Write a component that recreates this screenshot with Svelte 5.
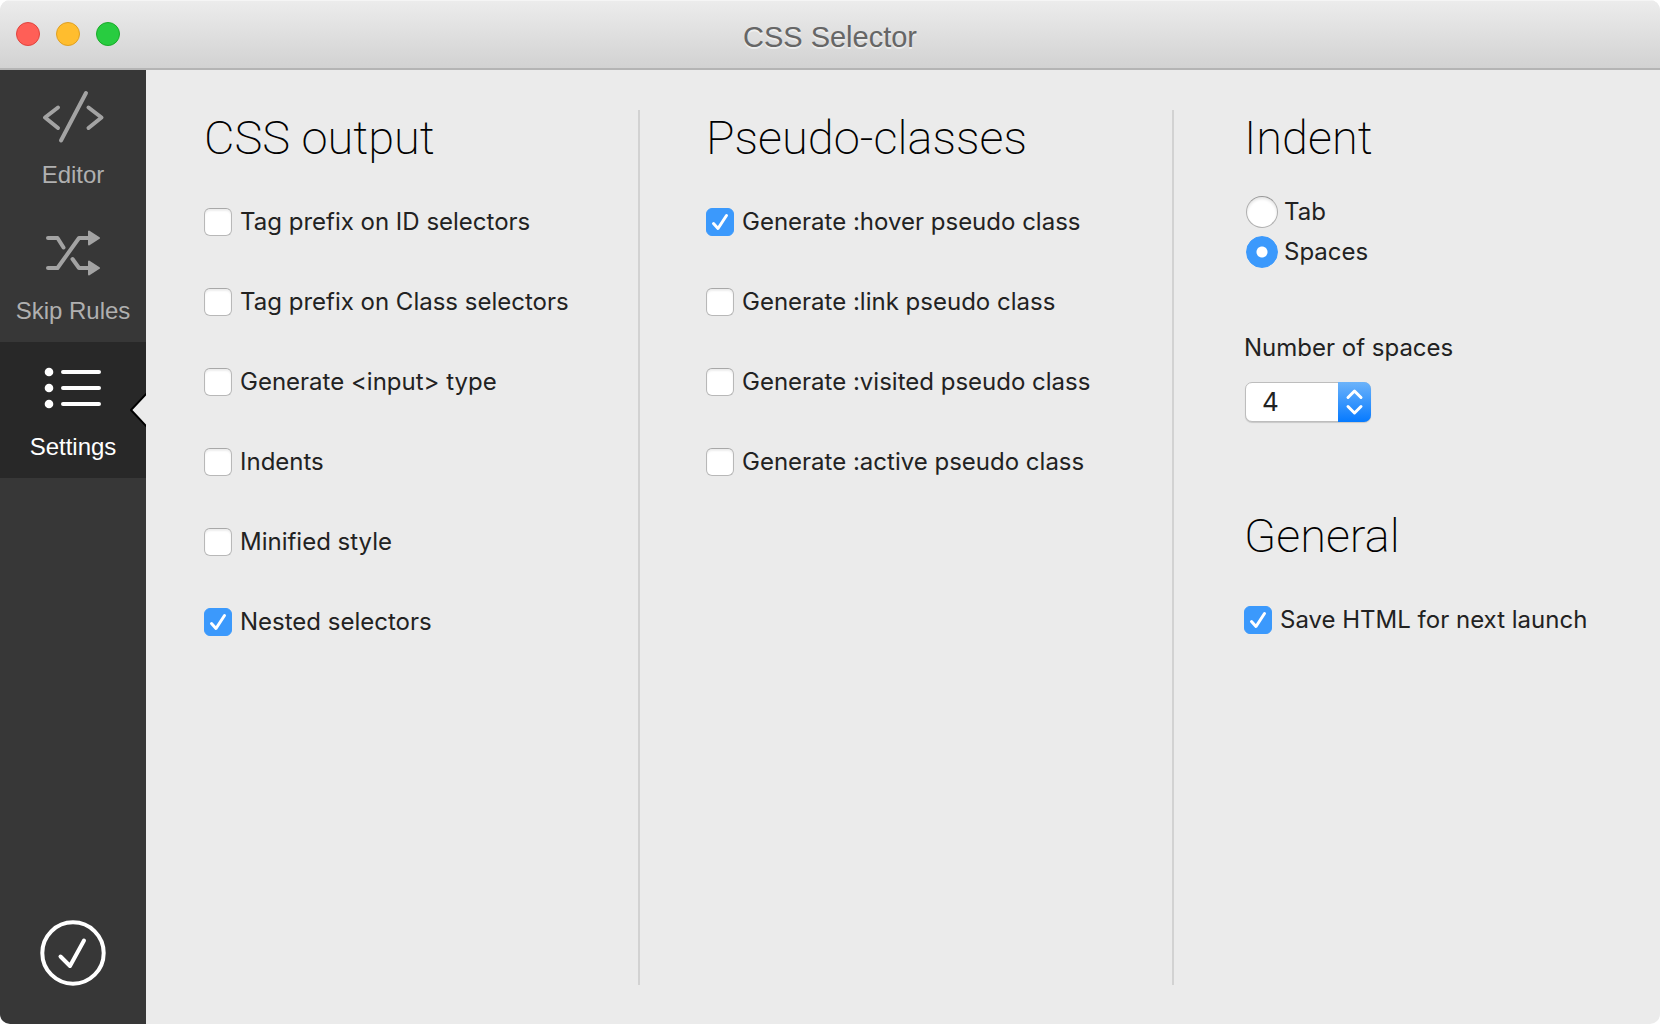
<script>
  let active = $state('settings');
  const tabs = [
    { id: 'editor', label: 'Editor' },
    { id: 'skip', label: 'Skip Rules' },
    { id: 'settings', label: 'Settings' }
  ];

  let output = $state([
    { id: 'tag-id', label: 'Tag prefix on ID selectors', on: false },
    { id: 'tag-class', label: 'Tag prefix on Class selectors', on: false },
    { id: 'input-type', label: 'Generate <input> type', on: false },
    { id: 'indents', label: 'Indents', on: false },
    { id: 'minified', label: 'Minified style', on: false },
    { id: 'nested', label: 'Nested selectors', on: true }
  ]);
  let pseudo = $state([
    { id: 'hover', label: 'Generate :hover pseudo class', on: true },
    { id: 'link', label: 'Generate :link pseudo class', on: false },
    { id: 'visited', label: 'Generate :visited pseudo class', on: false },
    { id: 'active', label: 'Generate :active pseudo class', on: false }
  ]);
  let general = $state([{ id: 'save', label: 'Save HTML for next launch', on: true }]);
  let indent = $state('spaces');
  let count = $state('4');
</script>

{#snippet checks(items)}
  <div class="checks">
    {#each items as item (item.id)}
      <label class="check" for={item.id}>
        <span class="box">
          <input type="checkbox" id={item.id} bind:checked={item.on} />
          <svg viewBox="0 0 28 28" aria-hidden="true"><path d="M7.5 15.5 12 20.500 20.500 7.500" /></svg>
        </span>
        {item.label}
      </label>
    {/each}
  </div>
{/snippet}

<div class="window">
  <header>
    <div class="lights">
      <button class="close" aria-label="Close"></button>
      <button class="minimize" aria-label="Minimize"></button>
      <button class="zoom" aria-label="Zoom"></button>
    </div>
    <h1>CSS Selector</h1>
  </header>

  <div class="body">
    <nav>
      {#each tabs as tab (tab.id)}
        <button class="tab" class:active={active === tab.id} onclick={() => (active = tab.id)}>
          <svg class="icon" viewBox="0 0 64 56" aria-hidden="true">
            {#if tab.id === 'editor'}
              <path d="M17 18.500 4 28.500 17 39M45 4 20 51.500M47.500 18.500 60.500 28.500 47.500 39" />
            {:else if tab.id === 'skip'}
              <path d="M7 13H16.500L22.500 22.500M7 43H16.500L38 13H48M31.500 34 38 43H48" />
              <path class="solid" d="M48 6.500V19.500L58 13ZM48 36.500V49.500L58 43Z" />
            {:else}
              <path d="M22 11H58M22 27H58M22 43H58" />
              <g class="dots"><circle cx="8" cy="11" r="4.300" /><circle cx="8" cy="27" r="4.300" /><circle cx="8" cy="43" r="4.300" /></g>
            {/if}
          </svg>
          <span>{tab.label}</span>
          {#if active === tab.id}
            <svg class="notch" viewBox="0 0 16 36" aria-hidden="true"><path d="M18 0 1 18 18 36" /></svg>
          {/if}
        </button>
      {/each}
      <button class="done" aria-label="Apply">
        <svg viewBox="0 0 66 66" aria-hidden="true"><circle cx="33" cy="33" r="30.700" /><path d="M20.500 36.500 30 46 44 20.500" /></svg>
      </button>
    </nav>

    <main>
      <section class="first">
        <h2>CSS output</h2>
        {@render checks(output)}
      </section>
      <section class="second">
        <h2>Pseudo-classes</h2>
        {@render checks(pseudo)}
      </section>
      <section class="third">
        <h2>Indent</h2>
        <div class="radios">
          <label for="tab"><input type="radio" id="tab" name="indent" value="tab" bind:group={indent} />Tab</label>
          <label for="spaces"><input type="radio" id="spaces" name="indent" value="spaces" bind:group={indent} />Spaces</label>
        </div>
        <label class="caption" for="count">Number of spaces</label>
        <div class="select">
          <select id="count" bind:value={count}>
            <option>2</option>
            <option>4</option>
            <option>8</option>
          </select>
          <svg viewBox="0 0 33 40" aria-hidden="true"><path d="M10 15.500 16.500 9 23 15.500M10 24.500 16.500 31 23 24.500" /></svg>
        </div>
        <h2>General</h2>
        {@render checks(general)}
      </section>
    </main>
  </div>
</div>

<style>
  :global(body) { background: #fff; }
  .window {
    display: flex;
    flex-direction: column;
    min-height: 100vh;
    border-radius: 10px;
    overflow: hidden;
    background: #ebebeb;
    color: #222;
    font: 24px/28px Inter, "Liberation Sans", sans-serif;
  }
  button {
    border: 0;
    padding: 0;
    background: none;
    font: inherit;
    color: inherit;
  }
  header {
    box-sizing: border-box;
    display: grid;
    grid-template-columns: 1fr auto 1fr;
    align-items: center;
    height: 70px;
    padding-bottom: 1px;
    background: linear-gradient(#ececec, #d2d2d2);
    border-top: 1px solid #f5f5f5;
    border-bottom: 2px solid #b4b4b4;
  }
  .lights { display: flex; gap: 16px; padding-left: 16px; }
  .lights button {
    width: 24px;
    height: 24px;
    border-radius: 50%;
    border: 1px solid #e0443e;
    background: #ff5f57;
  }
  .lights .minimize { border-color: #dfa023; background: #ffbd2e; }
  .lights .zoom { border-color: #1aab29; background: #28cc40; }
  h1 {
    margin: 0;
    padding-top: 6px;
    font: 400 29px/36px "Liberation Sans", sans-serif;
    color: #666;
    text-shadow: 0 2px 0 rgba(255, 255, 255, 0.5);
  }

  .body { flex: 1; display: flex; }
  nav {
    flex: none;
    width: 146px;
    display: flex;
    flex-direction: column;
    background: #373737;
  }
  .tab {
    position: relative;
    display: flex;
    flex-direction: column;
    align-items: center;
    gap: 16px;
    height: 136px;
    padding-top: 19px;
    font: 400 24px/28px "Liberation Sans", sans-serif;
    color: #b0b0b0;
  }
  .tab.active { background: #282828; color: #fff; }
  svg { display: block; fill: none; stroke-linecap: round; stroke-linejoin: round; }
  .icon {
    width: 64px;
    height: 56px;
    stroke: #a3a3a3;
    stroke-width: 4;
  }
  .icon .solid { fill: #a3a3a3; stroke-width: 2; }
  .active .icon { stroke: #fff; }
  .icon .dots { fill: #fff; stroke: none; }
  .notch {
    position: absolute;
    right: 0;
    top: 50px;
    width: 16px;
    height: 36px;
    fill: #ebebeb;
    stroke: #000;
    stroke-width: 2;
  }
  .done { align-self: center; margin: auto 0 38px; }
  .done svg { width: 66px; height: 66px; stroke: #fff; stroke-width: 4; }

  main {
    flex: 1;
    display: grid;
    grid-template-columns: 494fr 534fr 486fr;
    padding: 40px 0 39px;
  }
  section { padding-left: 66px; }
  .first { padding-left: 58px; }
  .first, .second { border-right: 2px solid #d2d2d2; }
  .third { padding-left: 70px; }
  h2 {
    margin: 0;
    font: 200 47px/56px Roboto, "Liberation Sans", sans-serif;
    color: #000;
  }
  .checks { display: grid; gap: 52px; margin-top: 42px; }
  .check { display: flex; gap: 8px; }
  .box { display: grid; }
  .box > * { grid-area: 1 / 1; }
  input { appearance: none; margin: 0; }
  .box input {
    width: 28px;
    height: 28px;
    border: 1px solid #b8b8b8;
    border-top-color: #a8a8a8;
    border-radius: 6px;
    background: #fff;
    box-shadow: inset 0 2px 2px #eee;
  }
  .box input:checked { border-color: #3b99fc; background: #3b99fc; box-shadow: none; }
  .box svg {
    width: 28px;
    height: 28px;
    stroke: none;
    stroke-width: 3;
    pointer-events: none;
  }
  .box input:checked + svg { stroke: #fff; }

  .radios { display: grid; gap: 8px; margin-top: 30px; padding-left: 2px; }
  .radios label { display: flex; align-items: center; gap: 6px; }
  .radios input {
    box-sizing: border-box;
    width: 32px;
    height: 32px;
    border: 1px solid #b0b0b0;
    border-top-color: #989898;
    border-radius: 50%;
    background: #fff;
    box-shadow: inset 0 2px 3px #e4e4e4;
  }
  .radios input:checked {
    border-color: #3b99fc;
    background: radial-gradient(circle, #fff 5px, #3b99fc 6px);
    box-shadow: none;
  }
  .caption { display: block; margin-top: 66px; }
  .select {
    display: flex;
    width: 126px;
    height: 40px;
    margin: 20px 0 86px 1px;
    position: relative;
  }
  select {
    appearance: none;
    box-sizing: border-box;
    width: 100%;
    padding: 0 40px 0 16px;
    border: 1px solid #bdbdbd;
    border-radius: 7px;
    background: #fff;
    color: #222;
    font: 26px/36px Inter, "Liberation Sans", sans-serif;
    box-shadow: 0 1px 1px rgba(0, 0, 0, 0.15);
  }
  .select svg {
    position: absolute;
    right: 0;
    top: 0;
    width: 33px;
    height: 40px;
    border-radius: 0 7px 7px 0;
    background: linear-gradient(#6cb3fa, #067aff);
    stroke: #fff;
    stroke-width: 3;
    pointer-events: none;
  }
</style>
